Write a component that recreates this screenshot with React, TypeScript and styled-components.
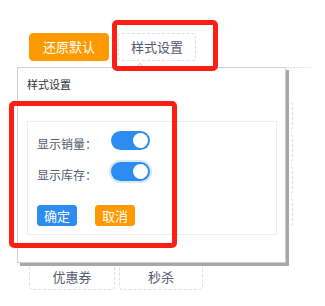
import React from "react";
import styled, { createGlobalStyle } from "styled-components";

const FONT = `"Noto Sans CJK SC", "Noto Sans", sans-serif`;
const BLUE = "#2d8cf0";
const ORANGE = "#ff9900";
const TEXT = "#515a6e";
const MARK = "#fe1f14";

const GlobalStyle = createGlobalStyle`
  body {
    margin: 0;
    background: #fff;
    font-family: ${FONT};
  }
`;

// slots hidden under the popover carry no label in the screenshot
const basicSlots = Array.from({ length: 12 }, (_, i) => i);
const marketingItems = ["优惠券", "秒杀"];

const App: React.FC = () => {
  return (
    <Page>
      <GlobalStyle />
      <Toolbar>
        <FilledButton>还原默认</FilledButton>
        <DashedButton>样式设置</DashedButton>
      </Toolbar>
      <Divider />
      <Library>
        <ItemGrid>
          {basicSlots.map((i) => (
            <Item key={i} />
          ))}
        </ItemGrid>
        <GroupGap />
        <ItemGrid>
          {marketingItems.map((name) => (
            <Item key={name}>{name}</Item>
          ))}
        </ItemGrid>
      </Library>

      <Popover>
        <PopoverTitle>样式设置</PopoverTitle>
        <Panel>
          <FormRow>
            <Label>显示销量：</Label>
            <Switch />
          </FormRow>
          <FormRow>
            <Label>显示库存：</Label>
            <Switch focused />
          </FormRow>
          <Actions>
            <SmallButton color={BLUE}>确定</SmallButton>
            <SmallButton color={ORANGE}>取消</SmallButton>
          </Actions>
        </Panel>
      </Popover>

      <Highlight style={{ left: 112, top: 20, width: 106, height: 51 }} />
      <Highlight style={{ left: 9, top: 101, width: 168, height: 147 }} />
    </Page>
  );
};

const Page = styled.div`
  position: relative;
  width: 325px;
  height: 306px;
  padding-top: 33px;
  box-sizing: border-box;
  overflow: hidden;
`;

const Toolbar = styled.div`
  display: flex;
  gap: 9px;
  padding-left: 29px;
`;

const ButtonBase = styled.button`
  height: 28px;
  padding: 0 11px;
  border-radius: 4px;
  font-family: ${FONT};
  font-size: 13px;
  line-height: 26px;
  box-sizing: border-box;
  cursor: pointer;
`;

const FilledButton = styled(ButtonBase)`
  width: 80px;
  border: 1px solid ${ORANGE};
  background: ${ORANGE};
  color: #fff;
`;

const DashedButton = styled(ButtonBase)`
  width: 78px;
  border: 1px dashed #dcdee2;
  background: #fff;
  color: ${TEXT};
`;

const Divider = styled.div`
  margin: 6px 0 0 17px;
  width: 294px;
  border-top: 1px solid #e8eaec;
`;

const Library = styled.div`
  padding: 34px 0 0 29px;
  display: flex;
  flex-direction: column;
  gap: 4px;
`;

const ItemGrid = styled.div`
  display: grid;
  grid-template-columns: 86px 84px 86px;
  grid-auto-rows: 28px;
  gap: 4px;
`;

const GroupGap = styled.div`
  height: 28px;
`;

const Item = styled.div`
  border: 1px dashed #dcdee2;
  border-radius: 4px;
  display: flex;
  align-items: center;
  justify-content: center;
  font-size: 13px;
  color: ${TEXT};
  box-sizing: border-box;
`;

const Popover = styled.div`
  position: absolute;
  left: 17px;
  top: 67px;
  width: 269px;
  height: 196px;
  box-sizing: border-box;
  background: #fff;
  border: 1px solid #cfcfcf;
  box-shadow: 3px 3px 0 #a8a8a8;
  display: flex;
  flex-direction: column;

  &::before {
    content: "";
    position: absolute;
    left: 119px;
    top: -4px;
    width: 5px;
    height: 5px;
    background: #fff;
    border-top: 1px solid #d6d6d6;
    border-left: 1px solid #d6d6d6;
    transform: rotate(45deg);
  }
`;

const PopoverTitle = styled.div`
  height: 32px;
  line-height: 32px;
  padding-left: 9px;
  font-size: 11px;
  color: #333;
`;

const Panel = styled.div`
  margin: 21px 8px 0 9px;
  padding: 9px 9px 8px;
  border: 1px solid #eeeeee;
  display: flex;
  flex-direction: column;
`;

const FormRow = styled.div`
  display: flex;
  align-items: flex-start;
  height: 19px;
  margin-bottom: 12px;
`;

const Label = styled.span`
  width: 74px;
  margin-top: 4px;
  font-size: 12px;
  line-height: 17px;
  color: ${TEXT};
`;

const Switch = styled.span<{ focused?: boolean }>`
  position: relative;
  width: 39px;
  height: 19px;
  border-radius: 10px;
  background: ${BLUE};
  box-shadow: ${({ focused }) =>
    focused ? "0 0 0 2px rgba(45, 140, 240, 0.2)" : "none"};

  &::after {
    content: "";
    position: absolute;
    right: 2px;
    top: 2px;
    width: 15px;
    height: 15px;
    border-radius: 50%;
    background: #fff;
  }
`;

const Actions = styled.div`
  display: flex;
  gap: 18px;
  margin-top: 12px;
`;

const SmallButton = styled.button<{ color: string }>`
  height: 21px;
  padding: 0 6px;
  border: 1px solid ${({ color }) => color};
  border-radius: 3px;
  background: ${({ color }) => color};
  color: #fff;
  font-family: ${FONT};
  font-size: 13px;
  line-height: 19px;
  box-sizing: border-box;
`;

const Highlight = styled.div`
  position: absolute;
  border: 5px solid ${MARK};
  border-radius: 5px;
  box-sizing: border-box;
  pointer-events: none;
`;

export default App;
